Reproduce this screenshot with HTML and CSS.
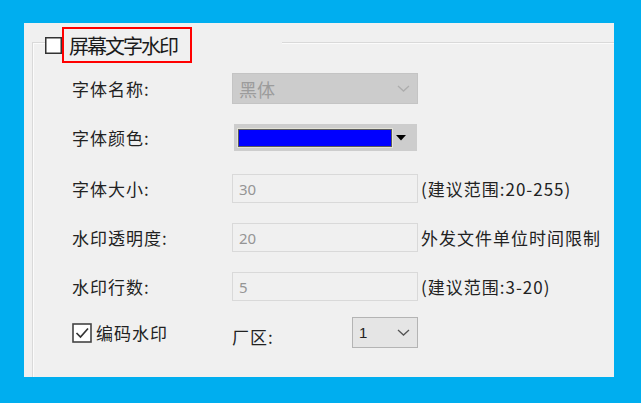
FILE: index.html
```html
<!DOCTYPE html>
<html lang="zh-CN">
<head>
<meta charset="utf-8">
<title>屏幕文字水印</title>
<link rel="stylesheet" href="styles.css">
</head>
<body>
<div class="panel">
  <div class="group">
    <div class="legend">
      <svg class="cb-title" width="17" height="17" viewBox="0 0 17 17"><rect x="0.75" y="0.75" width="15.5" height="15.5" fill="#fff" stroke="#333" stroke-width="1.5"/></svg>
      <span class="title-box">屏幕文字水印</span>
    </div>
    <div class="form">
      <div class="label">字体名称:</div>
      <div class="combo disabled">
        <span class="combo-text">黑体</span>
        <svg width="13" height="7" viewBox="0 0 13 7"><polyline points="1,1 6.5,6 12,1" fill="none" stroke="#adadad" stroke-width="1.3"/></svg>
      </div>
      <div></div>

      <div class="label">字体颜色:</div>
      <div class="color-pick">
        <div class="swatch"></div>
        <svg width="10" height="6" viewBox="0 0 10 6"><polygon points="0,0 10,0 5,5.5" fill="#000"/></svg>
      </div>
      <div></div>

      <div class="label">字体大小:</div>
      <input class="field" type="text" value="30" disabled>
      <div class="hint">(建议范围:20-255)</div>

      <div class="label">水印透明度:</div>
      <input class="field" type="text" value="20" disabled>
      <div class="hint">外发文件单位时间限制</div>

      <div class="label">水印行数:</div>
      <input class="field" type="text" value="5" disabled>
      <div class="hint">(建议范围:3-20)</div>

      <div class="check-row">
        <svg width="20" height="20" viewBox="0 0 20 20"><rect x="1" y="1" width="18" height="18" fill="#fff" stroke="#444" stroke-width="1.6"/><polyline points="4.5,10 8.5,14 16,5.5" fill="none" stroke="#333" stroke-width="1.7"/></svg>
        <span>编码水印</span>
      </div>
      <div class="zone">
        <span class="label">厂区:</span>
        <div class="combo small">
          <span class="combo-text">1</span>
          <svg width="13" height="7" viewBox="0 0 13 7"><polyline points="1,1 6.5,6 12,1" fill="none" stroke="#555" stroke-width="1.3"/></svg>
        </div>
      </div>
      <div></div>
    </div>
  </div>
</div>
</body>
</html>
```
FILE: styles.css
```css
* { box-sizing: border-box; }
html, body { margin: 0; }
body {
  width: 641px;
  height: 403px;
  background: #00aeef;
  padding: 23px 27px 26px 24px;
  font-family: "Noto Sans CJK SC", "Noto Sans", sans-serif;
  color: #222;
  overflow: hidden;
}
.panel {
  width: 590px;
  height: 354px;
  background: #f0f0f0;
  padding: 19px 0 0 8px;
  overflow: hidden;
}
.group {
  position: relative;
  height: 400px;
  border-top: 1px solid #d9d9d9;
  border-left: 1px solid #d9d9d9;
  box-shadow: inset 1px 1px 0 #fbfbfb;
  padding: 21px 0 0 39px;
}
.legend {
  position: absolute;
  left: 12px;
  top: -16px;
  width: 237px;
  height: 36px;
  background: #f0f0f0;
  display: flex;
  align-items: center;
}
.cb-title { flex: none; margin-top: 1px; }
.title-box {
  height: 36px;
  width: 130px;
  border: 2px solid #ff0000;
  padding: 0 0 0 5px;
  display: flex;
  align-items: center;
  font-size: 20px;
  letter-spacing: -2px;
  color: #1a1a1a;
}
.form {
  display: grid;
  grid-template-columns: 157px 186px auto;
  column-gap: 3px;
  grid-template-rows: 49px 49px 53px 45px 53px 39px;
  align-items: center;
}
.label {
  font-size: 17px;
  letter-spacing: 1px;
  color: #222;
}
.combo {
  height: 31px;
  display: flex;
  align-items: center;
  justify-content: space-between;
  padding: 0 7px 0 6px;
  border: 1px solid #c4c4c4;
  background: #cccccc;
}
.combo.disabled .combo-text {
  color: #9c9c9c;
  font-size: 18px;
}
.combo.small {
  width: 66px;
  background: #e5e5e5;
  border-color: #b4b4b4;
}
.combo.small .combo-text {
  font-family: "Liberation Sans", sans-serif;
  font-size: 15px;
  color: #222;
}
.color-pick {
  margin-left: 2px;
  width: 183px;
  height: 27px;
  background: #cdcdcd;
  display: flex;
  align-items: center;
  padding: 0 0 0 4px;
  gap: 4px;
}
.swatch {
  width: 154px;
  height: 18px;
  background: #0000ff;
  border: 1px solid #5a5a5a;
  box-shadow: 0 0 0 1px #e4e4d8;
}
.field {
  width: 186px;
  height: 29px;
  margin: 0;
  padding: 0 6px;
  border: 1px solid #d9d9d9;
  background: #f0f0f0;
  font-family: "Noto Sans", sans-serif;
  font-size: 15px;
  color: #959595;
  -webkit-text-fill-color: #959595;
  outline: none;
}
.hint {
  font-size: 17px;
  letter-spacing: 1px;
  color: #222;
  white-space: nowrap;
}
.check-row {
  display: flex;
  align-items: center;
  gap: 4px;
  font-size: 17px;
  letter-spacing: 1px;
}
.check-row svg { flex: none; }
.zone {
  display: flex;
  align-items: center;
  justify-content: space-between;
}
.zone .label { margin-top: 8px; }
```
